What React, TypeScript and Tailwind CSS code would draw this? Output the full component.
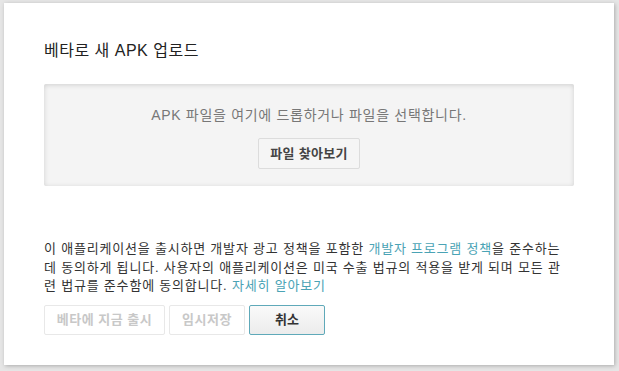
export default function App() {
	return (
		<div
			className="h-[371px] w-[619px] bg-[#e6e6e6] pl-[4px] pt-[3px] text-[#333]"
			style={{ fontFamily: '"Liberation Sans", "Noto Sans CJK KR", sans-serif' }}
		>
			<div className="h-[362px] w-[610px] bg-white px-[40px] pt-[36px] shadow-[1px_1px_4px_rgba(0,0,0,0.25)]">
				<h1 className="text-[16px] leading-[24px] tracking-[0.5px] text-[#222]">베타로 새 APK 업로드</h1>

				<div className="mt-[21px] flex h-[102px] w-[530px] flex-col items-center rounded-[2px] bg-[#f4f4f4] pt-[21px] shadow-[inset_0_1px_5px_rgba(0,0,0,0.15)]">
					<p className="text-[14px] leading-[20px] tracking-[0.7px] text-[#777]">
						APK 파일을 여기에 드롭하거나 파일을 선택합니다.
					</p>
					<button className="mt-[13px] h-[31px] rounded-[2px] border border-[#dcdcdc] bg-[#f5f5f5] px-[11px] text-[13px] font-bold tracking-[0.3px] text-[#444]">
						파일 찾아보기
					</button>
				</div>

				<p className="mt-[54px] w-[540px] whitespace-nowrap text-[13px] leading-[18.5px] tracking-[0.8px] text-[#333]">
					이 애플리케이션을 출시하면 개발자 광고 정책을 포함한{" "}
					<a className="text-[#4aa3b5]">개발자 프로그램 정책</a>을 준수하는
					<br />데 동의하게 됩니다. 사용자의 애플리케이션은 미국 수출 법규의 적용을 받게 되며 모든 관
					<br />련 법규를 준수함에 동의합니다. <a className="text-[#4aa3b5]">자세히 알아보기</a>
				</p>

				<div className="mt-[9px] flex gap-[4px]">
					<button className="h-[30px] w-[121px] rounded-[2px] border border-[#e8e8e8] bg-white text-[13px] font-bold tracking-[0.5px] text-[#c8c8c8]">
						베타에 지금 출시
					</button>
					<button className="h-[30px] w-[76px] rounded-[2px] border border-[#e8e8e8] bg-white text-[13px] font-bold tracking-[0.5px] text-[#c8c8c8]">
						임시저장
					</button>
					<button className="h-[30px] w-[76px] rounded-[2px] border border-[#5fa9b9] bg-gradient-to-b from-[#fafafa] to-[#ececec] text-[13px] font-bold text-[#333]">
						취소
					</button>
				</div>
			</div>
		</div>
	);
}
